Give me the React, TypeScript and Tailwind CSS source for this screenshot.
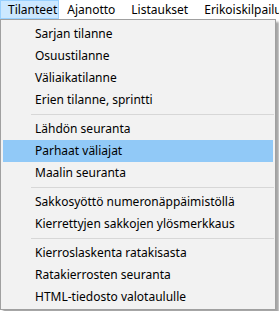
import React from 'react';

type Entry = { label: string; active?: boolean } | 'sep';

const MENU_BAR = ['Tilanteet', 'Ajanotto', 'Listaukset', 'Erikoiskilpailutyypit'];

const ITEMS: Entry[] = [
  { label: 'Sarjan tilanne' },
  { label: 'Osuustilanne' },
  { label: 'Väliaikatilanne' },
  { label: 'Erien tilanne, sprintti' },
  'sep',
  { label: 'Lähdön seuranta' },
  { label: 'Parhaat väliajat', active: true },
  { label: 'Maalin seuranta' },
  'sep',
  { label: 'Sakkosyöttö numeronäppäimistöllä' },
  { label: 'Kierrettyjen sakkojen ylösmerkkaus' },
  'sep',
  { label: 'Kierroslaskenta ratakisasta' },
  { label: 'Ratakierrosten seuranta' },
  { label: 'HTML-tiedosto valotaululle' },
];

const App: React.FC = () => {
  return (
    <div
      className="w-[279px] h-[311px] bg-white overflow-hidden text-[12px] text-black"
      style={{ fontFamily: '"Noto Sans", "Open Sans", sans-serif' }}
    >
      {/* menu bar */}
      <div className="flex h-[19px] whitespace-nowrap">
        {MENU_BAR.map((name, i) => (
          <div
            key={name}
            className={
              i === 0
                ? 'flex items-center pl-[7px] pr-[1px] border border-[#99d1ff] bg-[#cce8ff]'
                : 'flex items-center px-[7px] border border-transparent'
            }
          >
            {name}
          </div>
        ))}
      </div>

      {/* dropdown */}
      <div className="w-[276px] bg-[#f2f2f2] border border-[#a0a0a0] pt-[3px] pb-[1px] shadow-[3px_3px_2px_rgba(0,0,0,0.35)]">
        {ITEMS.map((item, i) =>
          item === 'sep' ? (
            <div key={i} className="h-[7px] flex items-center pl-[30px] pr-[1px]">
              <div className="h-px w-full bg-[#d7d7d7]" />
            </div>
          ) : (
            <div
              key={i}
              className={
                item.active
                  ? 'h-[22px] mx-[2px] flex items-center pl-[32px] bg-[#91c9f7] whitespace-nowrap'
                  : 'h-[22px] mx-[2px] flex items-center pl-[32px] whitespace-nowrap'
              }
            >
              {item.label}
            </div>
          )
        )}
      </div>
    </div>
  );
};

export default App;
